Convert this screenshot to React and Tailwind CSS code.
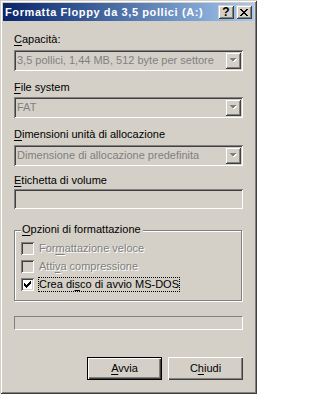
import React from "react";

const X_ROWS = ["11000011", "01100110", "00111100", "00011000", "00111100", "01100110", "11000011"];
const CHECK_ROWS = ["0000001", "0000011", "1000111", "1101110", "1111100", "0111000", "0010000"];

function PixelIcon({ rows, color }) {
  const w = rows[0].length;
  const h = rows.length;
  return (
    <svg width={w} height={h} viewBox={`0 0 ${w} ${h}`} shapeRendering="crispEdges" className="block">
      {rows.flatMap((r, y) =>
        r.split("").map((c, x) =>
          c === "1" ? <rect key={`${x}-${y}`} x={x} y={y} width={1} height={1} fill={color} /> : null
        )
      )}
    </svg>
  );
}

function U({ children }) {
  return <span className="underline underline-offset-[2px] decoration-1">{children}</span>;
}

function Arrow() {
  return (
    <svg width="8" height="5" viewBox="0 0 8 5" shapeRendering="crispEdges" className="block">
      <polygon points="1,1 8,1 4.5,4.5" fill="#ffffff" />
      <polygon points="0,0 7,0 3.5,3.5" fill="#808080" />
    </svg>
  );
}

function Combo({ text }) {
  return (
    <div className="h-[21px] w-[229px] p-[2px] flex bg-[#d4d0c8] shadow-[inset_1px_1px_#808080,inset_-1px_-1px_#ffffff,inset_2px_2px_#404040,inset_-2px_-2px_#d4d0c8]">
      <div className="flex-1 flex items-center pl-px text-[#808080] leading-[13px] whitespace-nowrap overflow-hidden">
        {text}
      </div>
      <div className="w-[16px] h-[17px] flex items-center justify-center bg-[#d4d0c8] shadow-[inset_1px_1px_#d4d0c8,inset_-1px_-1px_#404040,inset_2px_2px_#ffffff,inset_-2px_-2px_#808080]">
        <Arrow />
      </div>
    </div>
  );
}

function Check({ checked, disabled }) {
  return (
    <div
      className={`w-[13px] h-[13px] flex items-center justify-center shadow-[inset_1px_1px_#808080,inset_-1px_-1px_#ffffff,inset_2px_2px_#404040,inset_-2px_-2px_#d4d0c8] ${
        disabled ? "bg-[#d4d0c8]" : "bg-white"
      }`}
    >
      {checked ? <PixelIcon rows={CHECK_ROWS} color="#000000" /> : null}
    </div>
  );
}

export default function App() {
  return (
    <div className="w-[257px] h-[394px] p-[3px] bg-[#d4d0c8] flex flex-col shadow-[inset_1px_1px_#d4d0c8,inset_-1px_-1px_#404040,inset_2px_2px_#ffffff,inset_-2px_-2px_#808080] font-['Liberation_Sans',Arial,sans-serif] text-[11px] leading-[13px] text-black select-none">
      {/* Title bar */}
      <div className="h-[18px] flex items-center bg-linear-to-r from-[#0a246a] to-[#a6caf0] pl-[2px] pr-[2px]">
        <span className="flex-1 text-white font-bold whitespace-nowrap tracking-[0.6px]">
          Formatta Floppy da 3,5 pollici (A:)
        </span>
        <div className="flex gap-[2px]">
          <div className="w-[16px] h-[14px] flex items-center justify-center bg-[#d4d0c8] shadow-[inset_1px_1px_#d4d0c8,inset_-1px_-1px_#404040,inset_2px_2px_#ffffff,inset_-2px_-2px_#808080]">
            <span className="font-bold text-[12px] leading-none">?</span>
          </div>
          <div className="w-[16px] h-[14px] flex items-center justify-center bg-[#d4d0c8] shadow-[inset_1px_1px_#d4d0c8,inset_-1px_-1px_#404040,inset_2px_2px_#ffffff,inset_-2px_-2px_#808080]">
            <PixelIcon rows={X_ROWS} color="#000000" />
          </div>
        </div>
      </div>

      {/* Content */}
      <div className="flex-1 flex flex-col px-[11px]">
        <div className="mt-[12px]">
          <U>C</U>apacità:
        </div>
        <div className="mt-[4px]">
          <Combo text="3,5 pollici, 1,44 MB, 512 byte per settore" />
        </div>

        <div className="mt-[10px]">
          <U>F</U>ile system
        </div>
        <div className="mt-[3px]">
          <Combo text="FAT" />
        </div>

        <div className="mt-[10px]">
          <U>D</U>imensioni unità di allocazione
        </div>
        <div className="mt-[4px]">
          <Combo text="Dimensione di allocazione predefinita" />
        </div>

        <div className="mt-[8px]">
          <U>E</U>tichetta di volume
        </div>
        <div className="mt-[2px] h-[20px] w-[229px] bg-[#d4d0c8] shadow-[inset_1px_1px_#808080,inset_-1px_-1px_#ffffff,inset_2px_2px_#404040,inset_-2px_-2px_#d4d0c8]" />

        {/* Group box */}
        <div className="mt-[21px] relative w-[228px] h-[71px] border border-[#808080] shadow-[inset_1px_1px_#ffffff,1px_1px_#ffffff] pl-[6px] pt-[11px] flex flex-col gap-[5px]">
          <div className="absolute left-[6px] top-[-8px] bg-[#d4d0c8] pl-px pr-[2px]">
            <U>O</U>pzioni di formattazione
          </div>
          <div className="h-[13px] flex items-center">
            <Check disabled />
            <span className="ml-[5px] text-[#808080] [text-shadow:1px_1px_#ffffff]">
              For<U>m</U>attazione veloce
            </span>
          </div>
          <div className="h-[13px] flex items-center">
            <Check disabled />
            <span className="ml-[5px] text-[#808080] [text-shadow:1px_1px_#ffffff]">
              Atti<U>v</U>a compressione
            </span>
          </div>
          <div className="h-[13px] flex items-center">
            <Check checked />
            <span className="ml-[4px] border border-dotted border-black">
              Crea di<U>s</U>co di avvio MS-DOS
            </span>
          </div>
        </div>

        {/* Progress bar */}
        <div className="mt-[15px] h-[14px] w-[229px] border border-t-[#808080] border-l-[#808080] border-r-white border-b-white" />

        {/* Buttons */}
        <div className="mt-[27px] flex justify-end gap-[6px]">
          <div className="w-[75px] h-[23px] border border-black flex items-center justify-center bg-[#d4d0c8] shadow-[inset_1px_1px_#ffffff,inset_-1px_-1px_#404040,inset_-2px_-2px_#808080]">
            <span>
              <U>A</U>vvia
            </span>
          </div>
          <div className="w-[75px] h-[23px] flex items-center justify-center bg-[#d4d0c8] shadow-[inset_1px_1px_#ffffff,inset_-1px_-1px_#404040,inset_-2px_-2px_#808080]">
            <span>
              C<U>h</U>iudi
            </span>
          </div>
        </div>
      </div>
    </div>
  );
}
